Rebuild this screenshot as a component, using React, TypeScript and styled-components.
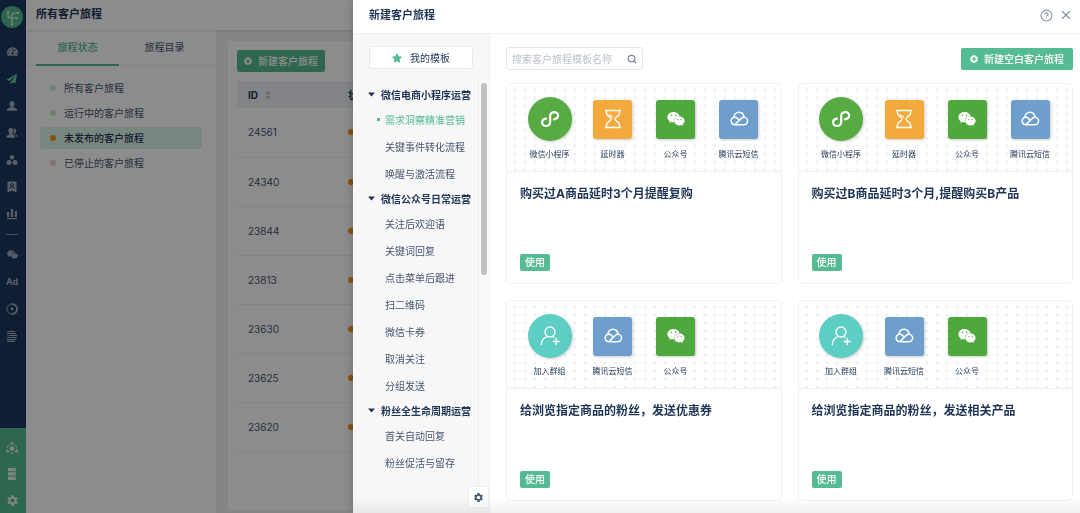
import React from 'react';
import styled, { createGlobalStyle } from 'styled-components';
import { FaPaperPlane, FaPlusCircle, FaStar, FaTachometerAlt, FaWeixin } from 'react-icons/fa';
import { MdSettings } from 'react-icons/md';
import { CircleHelp, Search, X } from 'lucide-react';

const navy = '#1f3556';
const slate = '#475671';
const green = '#55bb93';
const line = '#f0f1f3';

const GlobalStyle = createGlobalStyle`
  *, *::before, *::after { box-sizing: border-box; }
  body {
    margin: 0;
    overflow: hidden;
    background: #fff;
    color: ${slate};
    font: 10px/14px Inter, "Noto Sans CJK SC", sans-serif;
  }
  button, input { font: inherit; color: inherit; margin: 0; }
  button { border: 0; padding: 0; background: none; cursor: pointer; }
  h1, h2, h3, ul { margin: 0; padding: 0; font-size: inherit; font-weight: inherit; }
  ul { list-style: none; }
  a { color: inherit; text-decoration: none; }
  svg { display: block; flex: none; }
`;

/* ---------- page behind the drawer ---------- */

const Shell = styled.div`
  display: flex;
  min-height: 100vh;
`;

const Sidebar = styled.nav`
  display: flex;
  flex-direction: column;
  flex: none;
  width: 26px;
  padding-top: 6px;
  background: #1b385f;
`;

const LogoLink = styled.a`
  display: block;
  width: 22px;
  margin: 0 0 10px 1px;
`;

const NavLink = styled.a<{ $active?: boolean; $height?: number }>`
  display: flex;
  align-items: center;
  justify-content: center;
  height: ${(p) => p.$height ?? 27}px;
  padding-right: 2px;
  color: ${(p) => (p.$active ? '#5cc79c' : '#a4adbd')};
  font-size: 9px;
  font-weight: 700;
`;

const NavDivider = styled.hr`
  width: 12px;
  height: 1px;
  margin: 7px 0 6px 6px;
  border: 0;
  background: #8492a8;
`;

const NavFooter = styled.div`
  margin-top: auto;
  padding-top: 7px;
  background: #55bb93;

  ${NavLink} { color: #e6f4ee; }
`;

const Page = styled.div`
  display: flex;
  flex: 1;
  min-width: 0;
  flex-direction: column;
`;

const PageHeader = styled.header`
  display: flex;
  align-items: center;
  height: 30px;
  padding: 0 10px 2px;
  box-shadow: 0 1px 2px rgba(0, 0, 0, 0.12);
  z-index: 1;
`;

const PageTitle = styled.h1`
  color: ${navy};
  font-size: 11px;
  font-weight: 700;
`;

const PageBody = styled.div`
  display: flex;
  flex: 1;
`;

const StatusPanel = styled.section`
  flex: none;
  width: 190px;
`;

const Tabs = styled.div`
  display: flex;
  gap: 4px;
  height: 36px;
  padding: 0 10px;
  border-bottom: 1px solid ${line};
`;

const Tab = styled.button<{ $active?: boolean }>`
  flex: 1;
  height: 36px;
  border-bottom: 2px solid ${(p) => (p.$active ? green : 'transparent')};
  color: ${(p) => (p.$active ? green : slate)};
  font-weight: ${(p) => (p.$active ? 500 : 400)};
`;

const StatusList = styled.ul`
  display: flex;
  flex-direction: column;
  gap: 3px;
  padding: 11px 14px;
`;

const StatusItem = styled.li<{ $active?: boolean }>`
  display: flex;
  align-items: center;
  gap: 8px;
  height: 22px;
  padding: 0 10px;
  border-radius: 2px;
  background: ${(p) => (p.$active ? '#dff6ec' : 'none')};
  color: ${(p) => (p.$active ? navy : slate)};
  font-weight: ${(p) => (p.$active ? 500 : 400)};
`;

const Dot = styled.i<{ $color: string }>`
  display: block;
  width: 6px;
  height: 6px;
  border-radius: 50%;
  background: ${(p) => p.$color};
`;

const Content = styled.main`
  flex: 1;
  min-width: 0;
  padding: 11px 12px 3px;
  background: #eff2f5;
`;

const Sheet = styled.section`
  height: 100%;
  padding: 9px;
  background: #fff;
`;

const PrimaryButton = styled.button<{ $wide?: boolean }>`
  display: flex;
  align-items: center;
  justify-content: center;
  gap: 6px;
  width: ${(p) => (p.$wide ? 112 : 88)}px;
  height: 22px;
  border-radius: 2px;
  background: ${green};
  color: #fff;
  font-weight: 500;
`;

const Table = styled.table`
  width: 100%;
  margin-top: 9px;
  border-collapse: collapse;
  table-layout: fixed;

  th {
    height: 27px;
    padding: 0 0 0 11px;
    background: #edf1f6;
    color: ${navy};
    font-weight: 700;
    text-align: left;
  }
  th:first-child { width: 100px; }
  td {
    height: 49px;
    padding: 0 0 0 11px;
    border-bottom: 1px solid ${line};
  }
`;

const Sortable = styled.span`
  display: flex;
  align-items: center;
  gap: 7px;
`;

const Mask = styled.div`
  position: fixed;
  inset: 0;
  z-index: 2;
  background: rgba(0, 0, 0, 0.45);
`;

/* ---------- drawer ---------- */

const Drawer = styled.section`
  position: fixed;
  inset: 0 0 0 353px;
  z-index: 3;
  display: flex;
  flex-direction: column;
  background: #fff;
  box-shadow: -2px 0 8px rgba(0, 0, 0, 0.15);

  &::after {
    content: '';
    position: absolute;
    inset: auto 0 0 0;
    height: 16px;
    background: linear-gradient(transparent, rgba(0, 0, 0, 0.06));
    pointer-events: none;
  }
`;

const DrawerHeader = styled.header`
  display: flex;
  align-items: center;
  flex: none;
  height: 34px;
  padding: 0 7px 3px 16px;
  border-bottom: 1px solid ${line};
`;

const HeaderActions = styled.div`
  display: flex;
  align-items: center;
  gap: 6px;
  margin-left: auto;
  color: #8592a6;
`;

const DrawerBody = styled.div`
  display: flex;
  flex: 1;
  min-height: 0;
`;

const TemplateNav = styled.aside`
  display: flex;
  flex-direction: column;
  flex: none;
  width: 137px;
  padding-top: 12px;
  border-right: 1px solid ${line};
  background: #f7f7f7;
`;

const MineButton = styled.button`
  display: flex;
  align-items: center;
  justify-content: center;
  gap: 8px;
  flex: none;
  width: 104px;
  height: 23px;
  margin-left: 16px;
  border: 1px solid #e8eaed;
  border-radius: 3px;
  background: #fff;
  color: ${navy};
`;

const NavScroll = styled.div`
  display: flex;
  flex: 1;
  min-height: 0;
  margin-top: 11px;
`;

const Tree = styled.div`
  flex: 1;
  padding-top: 3px;
  border-right: 1px solid #ececec;
`;

const Track = styled.div`
  flex: none;
  width: 10px;
  padding: 3px 2px;
  background: #fafafa;
`;

const Thumb = styled.div`
  width: 6px;
  height: 192px;
  border-radius: 3px;
  background: #c1c1c1;
`;

const GroupTitle = styled.button`
  display: flex;
  align-items: center;
  gap: 6px;
  height: 23px;
  padding-left: 15px;
  color: ${navy};
  font-weight: 700;
  white-space: nowrap;
`;

const Entry = styled.li<{ $active?: boolean }>`
  display: flex;
  align-items: center;
  gap: 5px;
  height: 27px;
  padding-left: ${(p) => (p.$active ? 24 : 32)}px;
  color: ${(p) => (p.$active ? green : slate)};
  white-space: nowrap;

  &::before {
    content: '';
    display: ${(p) => (p.$active ? 'block' : 'none')};
    width: 3px;
    height: 3px;
    background: ${green};
  }
`;

const GearButton = styled.button`
  display: flex;
  align-items: center;
  justify-content: center;
  flex: none;
  width: 21px;
  height: 22px;
  margin: 0 0 5px auto;
  border: 1px solid ${line};
  background: #fff;
  color: ${slate};
`;

const Gallery = styled.div`
  flex: 1;
  min-width: 0;
  padding: 13px 7px 12px 16px;
  overflow: hidden;
`;

const Toolbar = styled.div`
  display: flex;
  align-items: center;
  justify-content: space-between;
`;

const SearchBox = styled.label`
  display: flex;
  align-items: center;
  width: 137px;
  height: 23px;
  padding: 0 5px;
  border: 1px solid #e3e6ea;
  border-radius: 3px;
  color: #7d8a9e;

  input {
    flex: 1;
    min-width: 0;
    padding: 0;
    border: 0;
    outline: 0;
    background: none;
  }
  input::placeholder { color: #bcc1c9; opacity: 1; }
`;

const Grid = styled.div`
  display: grid;
  grid-template-columns: repeat(2, minmax(0, 1fr));
  gap: 16px;
  margin-top: 13px;
`;

const Card = styled.article`
  display: flex;
  flex-direction: column;
  min-height: 201px;
  border: 1px solid ${line};
  border-radius: 5px;
`;

const Flow = styled.div`
  display: flex;
  height: 88px;
  padding: 13px 0 0 11px;
  border-bottom: 1px solid ${line};
  background: radial-gradient(circle, #f0f1f3 1px, transparent 2px) 3px 2px / 10px 8px;
`;

const Node = styled.div`
  display: flex;
  flex-direction: column;
  align-items: center;
  flex: none;
  width: 63px;
  color: ${navy};
  font-size: 8px;
  line-height: 12px;
  white-space: nowrap;
`;

const NodeSlot = styled.div`
  display: flex;
  align-items: center;
  height: 44px;
  margin-bottom: 7px;
`;

const NodeTile = styled.div<{ $color: string; $round?: boolean }>`
  display: flex;
  align-items: center;
  justify-content: center;
  width: ${(p) => (p.$round ? 44 : 39)}px;
  height: ${(p) => (p.$round ? 44 : 39)}px;
  border-radius: ${(p) => (p.$round ? '50%' : '3px')};
  background: ${(p) => p.$color};
  box-shadow: 1px 1px 3px rgba(0, 0, 0, 0.2);
  color: #fff;
`;

const CardBody = styled.div`
  display: flex;
  flex: 1;
  flex-direction: column;
  align-items: flex-start;
  padding: 13px 13px 12px;
`;

const CardTitle = styled.h3`
  color: ${navy};
  font-size: 12px;
  font-weight: 700;
  line-height: 18px;
`;

const UseButton = styled.button`
  height: 17px;
  width: 30px;
  margin-top: auto;
  border-radius: 2px;
  background: ${green};
  color: #fff;
  line-height: 17px;
  font-weight: 500;
`;

/* ---------- drawings ---------- */

const Logo = () => (
  <svg width="22" height="22" viewBox="0 0 22 22" fill="none" stroke="#eaf6f1" strokeWidth="1.2">
    <circle cx="11" cy="11" r="11" fill="#52b98f" stroke="none" />
    <path d="M7 6v4q0 2 2 2h6M11 18.500V9.500q0-2.500 2.500-2.500H17" />
    <g fill="#eaf6f1" stroke="none">
      <circle cx="7" cy="6" r="1.100" />
      <circle cx="15.500" cy="12" r="1.100" />
      <circle cx="17" cy="7" r="1.100" />
      <circle cx="11" cy="18.500" r="1.100" />
    </g>
  </svg>
);

const PersonIcon = () => (
  <svg width="12" height="12" viewBox="0 0 12 12" fill="currentColor">
    <path d="M6 1a2.600 2.900 0 0 1 1.300 5.400v.8l2.900 1.300q.8.400.8 1.300v1H1v-1q0-.9.800-1.300l2.900-1.300v-.8A2.600 2.900 0 0 1 6 1z" />
  </svg>
);

const PeopleIcon = () => (
  <svg width="12" height="12" viewBox="0 0 12 12" fill="currentColor">
    <path d="M4.800 1a2.500 2.800 0 0 1 1.200 5.300v.8l2 1.100q.8.400.8 1.300v1.300H.5V9.700q0-.9.800-1.300l2.300-1.300v-.8A2.500 2.800 0 0 1 4.800 1z" />
    <path d="M7.600 1.300a2.500 2.600 0 0 1 1.100 4.900v.7l2 1.200q.8.500.8 1.600H10q0-1.300-.8-1.800L7.300 6.600Q8.700 4 7.600 1.300z" />
  </svg>
);

const CirclesIcon = () => (
  <svg width="12" height="12" viewBox="0 0 12 12" fill="currentColor">
    <circle cx="6" cy="3.300" r="2.200" />
    <circle cx="3" cy="8.500" r="2.500" />
    <circle cx="9" cy="8.500" r="2.500" />
  </svg>
);

const BadgeIcon = () => (
  <svg width="12" height="12" viewBox="0 0 12 12">
    <path d="M1.500.5h9v11L6 9.500l-4.500 2z" fill="currentColor" />
    <path d="M3.500 8q.3-2.300 2.500-2.300T8.500 8M6 5.700a1.500 1.500 0 1 0 0-3 1.500 1.500 0 0 0 0 3z" fill="none" stroke="#1b385f" strokeWidth="1" />
  </svg>
);

const BarsIcon = () => (
  <svg width="12" height="12" viewBox="0 0 12 12" fill="currentColor">
    <path d="M1 4h2.200v5H1zM4.900 1h2.200v8H4.900zM8.800 3H11v6H8.800zM1 10h10v1.200H1z" />
  </svg>
);

const RingIcon = () => (
  <svg width="12" height="12" viewBox="0 0 12 12" fill="none" stroke="currentColor" strokeWidth="1.900">
    <path d="M6 1a5 5 0 0 1 0 10" />
    <path d="M6 11A5 5 0 0 1 6 1" opacity="0.500" />
    <circle cx="6" cy="6" r="1.400" fill="currentColor" stroke="none" />
  </svg>
);

const LinesIcon = () => (
  <svg width="12" height="12" viewBox="0 0 12 12" fill="none" stroke="currentColor" strokeWidth="1.200">
    <path d="M1 1.500h8M1 3.500h9M3 5.500h8M1 7.500h10M1 9.500h9M1 11.300h8" />
    <path d="M1 5.500h2" opacity="0.500" />
  </svg>
);

const OrbitIcon = () => (
  <svg width="12" height="12" viewBox="0 0 12 12" fill="currentColor">
    <circle cx="6" cy="6.500" r="4.700" fill="none" stroke="currentColor" strokeWidth="0.900" strokeDasharray="3.500 1.400" />
    <circle cx="6" cy="6.500" r="2.300" />
    <circle cx="6" cy="1.300" r="1.200" />
    <circle cx="1.500" cy="9.300" r="1.300" />
    <circle cx="10.500" cy="9.300" r="1.300" />
  </svg>
);

const ServerIcon = () => (
  <svg width="12" height="12" viewBox="0 0 12 12" fill="currentColor">
    <path d="M2 0h8v3.300H2zM2 4.300h8v3.300H2zM2 8.600h8v3.300H2z" />
    <path d="M8 1.600h1M8 6h1M8 10.300h1" stroke="#55bb93" />
  </svg>
);

const SortIcon = () => (
  <svg width="6" height="10" viewBox="0 0 6 10" fill="#b9bcc2">
    <path d="M3 1l3 3.200H0zM3 9.500L0 6.300h6z" />
  </svg>
);

const CaretIcon = () => (
  <svg width="7" height="5" viewBox="0 0 7 5" fill={navy}>
    <path d="M0 .5h7L3.500 4.500z" />
  </svg>
);

const MiniProgramIcon = () => (
  <svg width="20" height="20" viewBox="0 0 20 20" fill="none" stroke="currentColor" strokeWidth="2.200" strokeLinecap="round">
    <path d="M14 10.300c2.400-.4 4.100-1.800 4.100-3.700 0-2-1.700-3.500-3.900-3.500S10.200 4.700 10.200 6.700v6.400c0 2.200-1.800 3.900-4.100 3.900S2.100 15.400 2.100 13.400c0-1.900 1.600-3.300 3.900-3.700" />
  </svg>
);

const HourglassIcon = () => (
  <svg width="20" height="20" viewBox="0 0 20 20" fill="none" stroke="currentColor" strokeWidth="1.400" strokeLinejoin="round" strokeLinecap="round">
    <path d="M2.500 1.500h15M2.500 18.500h15" />
    <path d="M3.500 1.500v2.800q0 1 .8 1.700L7.600 9q.9 1 0 2l-3.300 3q-.8.700-.8 1.700v2.800M16.500 1.500v2.800q0 1-.8 1.700L12.400 9q-.9 1 0 2l3.300 3q.8.700.8 1.700v2.800" />
    <path d="M6.500 5.500Q7.500 7 9.500 8" strokeWidth="1.200" />
  </svg>
);

const CloudIcon = () => (
  <svg width="20" height="20" viewBox="0 0 20 20" fill="none" stroke="currentColor" strokeWidth="1.500" strokeLinecap="round">
    <path d="M5.400 15.700h9.500a3.700 3.700 0 1 0-2.600-6.300L5.700 15.700a3.700 3.700 0 1 1 2.800-6.200l1.500 1.400" />
    <path d="M4.900 8.300a5.100 5.100 0 0 1 10.200-.1" />
  </svg>
);

const JoinIcon = () => (
  <svg width="20" height="20" viewBox="0 0 20 20" fill="none" stroke="currentColor" strokeWidth="1.300" strokeLinecap="round">
    <circle cx="10" cy="6" r="5" />
    <path d="M1.300 18.500c.3-4 2.700-7 6-7.900M12.500 10.500l1.700.8M16.200 12.500v6M13.200 15.500h6" />
  </svg>
);

/* ---------- data ---------- */

const kinds = {
  mini: { label: '微信小程序', color: '#57ab42', round: true, icon: <MiniProgramIcon /> },
  timer: { label: '延时器', color: '#f4a93c', round: false, icon: <HourglassIcon /> },
  account: { label: '公众号', color: '#4ea83c', round: false, icon: <FaWeixin size={18} /> },
  sms: { label: '腾讯云短信', color: '#6e9fcc', round: false, icon: <CloudIcon /> },
  join: { label: '加入群组', color: '#5dcec3', round: true, icon: <JoinIcon /> },
};

type Kind = keyof typeof kinds;

const templates: { title: string; flow: Kind[] }[] = [
  { title: '购买过A商品延时3个月提醒复购', flow: ['mini', 'timer', 'account', 'sms'] },
  { title: '购买过B商品延时3个月,提醒购买B产品', flow: ['mini', 'timer', 'account', 'sms'] },
  { title: '给浏览指定商品的粉丝，发送优惠券', flow: ['join', 'sms', 'account'] },
  { title: '给浏览指定商品的粉丝，发送相关产品', flow: ['join', 'sms', 'account'] },
];

const groups = [
  { title: '微信电商小程序运营', items: ['需求洞察精准营销', '关键事件转化流程', '唤醒与激活流程'] },
  {
    title: '微信公众号日常运营',
    items: ['关注后欢迎语', '关键词回复', '点击菜单后跟进', '扫二维码', '微信卡券', '取消关注', '分组发送'],
  },
  { title: '粉丝全生命周期运营', items: ['首关自动回复', '粉丝促活与留存'] },
];

const statuses = [
  { label: '所有客户旅程', color: '#cfe9de' },
  { label: '运行中的客户旅程', color: '#c9e6cd' },
  { label: '未发布的客户旅程', color: '#f5961d', active: true },
  { label: '已停止的客户旅程', color: '#f7cfcb' },
];

const journeys = ['24561', '24340', '23844', '23813', '23630', '23625', '23620'];

const navIcons = [
  { name: '仪表盘', icon: <FaTachometerAlt size={11} /> },
  { name: '客户旅程', icon: <FaPaperPlane size={10} />, active: true },
  { name: '客户', icon: <PersonIcon /> },
  { name: '群组', icon: <PeopleIcon /> },
  { name: '标签', icon: <CirclesIcon /> },
  { name: '名片', icon: <BadgeIcon /> },
  { name: '报表', icon: <BarsIcon /> },
];

const channelIcons = [
  { name: '微信', icon: <FaWeixin size={11} /> },
  { name: '广告', icon: 'Ad' },
  { name: '监测', icon: <RingIcon /> },
  { name: '表单', icon: <LinesIcon /> },
];

const footerIcons = [
  { name: '连接', icon: <OrbitIcon /> },
  { name: '数据', icon: <ServerIcon /> },
  { name: '设置', icon: <MdSettings size={13} /> },
];

/* ---------- composition ---------- */

const TemplateCard = ({ title, flow }: { title: string; flow: Kind[] }) => (
  <Card>
    <Flow>
      {flow.map((key) => {
        const kind = kinds[key];
        return (
          <Node key={key}>
            <NodeSlot>
              <NodeTile $color={kind.color} $round={kind.round}>{kind.icon}</NodeTile>
            </NodeSlot>
            {kind.label}
          </Node>
        );
      })}
    </Flow>
    <CardBody>
      <CardTitle>{title}</CardTitle>
      <UseButton>使用</UseButton>
    </CardBody>
  </Card>
);

export default function App() {
  return (
    <>
      <GlobalStyle />
      <Shell>
        <Sidebar>
          <LogoLink href="#" aria-label="首页"><Logo /></LogoLink>
          {navIcons.map((n) => (
            <NavLink key={n.name} href="#" aria-label={n.name} $active={n.active}>{n.icon}</NavLink>
          ))}
          <NavDivider />
          {channelIcons.map((n) => (
            <NavLink key={n.name} href="#" aria-label={n.name}>{n.icon}</NavLink>
          ))}
          <NavFooter>
            {footerIcons.map((n) => (
              <NavLink key={n.name} href="#" aria-label={n.name} $height={26}>{n.icon}</NavLink>
            ))}
          </NavFooter>
        </Sidebar>
        <Page>
          <PageHeader><PageTitle>所有客户旅程</PageTitle></PageHeader>
          <PageBody>
            <StatusPanel>
              <Tabs role="tablist">
                <Tab role="tab" aria-selected $active>旅程状态</Tab>
                <Tab role="tab" aria-selected={false}>旅程目录</Tab>
              </Tabs>
              <StatusList>
                {statuses.map((s) => (
                  <StatusItem key={s.label} $active={s.active}>
                    <Dot $color={s.color} />
                    {s.label}
                  </StatusItem>
                ))}
              </StatusList>
            </StatusPanel>
            <Content>
              <Sheet>
                <PrimaryButton><FaPlusCircle size={8} />新建客户旅程</PrimaryButton>
                <Table>
                  <thead>
                    <tr>
                      <th><Sortable>ID <SortIcon /></Sortable></th>
                      <th>状态</th>
                    </tr>
                  </thead>
                  <tbody>
                    {journeys.map((id) => (
                      <tr key={id}>
                        <td>{id}</td>
                        <td><Dot $color="#f5961d" /></td>
                      </tr>
                    ))}
                  </tbody>
                </Table>
              </Sheet>
            </Content>
          </PageBody>
        </Page>
      </Shell>
      <Mask />
      <Drawer role="dialog" aria-label="新建客户旅程">
        <DrawerHeader>
          <PageTitle as="h2">新建客户旅程</PageTitle>
          <HeaderActions>
            <button aria-label="帮助"><CircleHelp size={13} strokeWidth={2} /></button>
            <button aria-label="关闭"><X size={14} strokeWidth={2} /></button>
          </HeaderActions>
        </DrawerHeader>
        <DrawerBody>
          <TemplateNav>
            <MineButton><FaStar size={10} color={green} />我的模板</MineButton>
            <NavScroll>
              <Tree>
                {groups.map((g, gi) => (
                  <section key={g.title}>
                    <GroupTitle><CaretIcon />{g.title}</GroupTitle>
                    <ul>
                      {g.items.map((item, i) => (
                        <Entry key={item} $active={gi === 0 && i === 0}>{item}</Entry>
                      ))}
                    </ul>
                  </section>
                ))}
              </Tree>
              <Track><Thumb /></Track>
            </NavScroll>
            <GearButton aria-label="模板设置"><MdSettings size={11} /></GearButton>
          </TemplateNav>
          <Gallery>
            <Toolbar>
              <SearchBox>
                <input aria-label="搜索模板" placeholder="搜索客户旅程模板名称" />
                <Search size={10} strokeWidth={3} />
              </SearchBox>
              <PrimaryButton $wide><FaPlusCircle size={8} />新建空白客户旅程</PrimaryButton>
            </Toolbar>
            <Grid>
              {templates.map((t) => <TemplateCard key={t.title} {...t} />)}
            </Grid>
          </Gallery>
        </DrawerBody>
      </Drawer>
    </>
  );
}
